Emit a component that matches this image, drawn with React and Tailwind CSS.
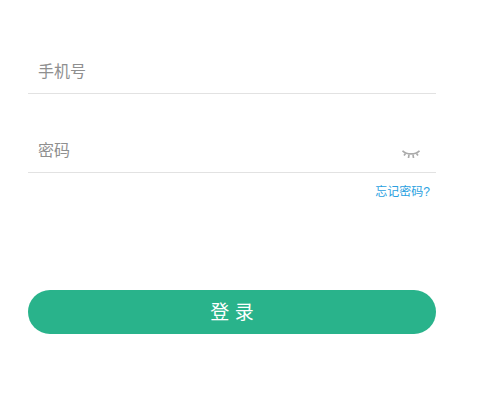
export default function App() {
  return (
    <div className="w-[483px] h-[408px] bg-white pt-[50px] pl-[28px] font-['Liberation_Sans','Noto_Sans_CJK_SC',sans-serif]">
      <div className="w-[408px]">
        <div className="h-[44px] border-b border-[#e2e2e2] pl-[10px] flex items-center text-[16px] text-[#8f8f8f]">手机号</div>
        <div className="mt-[35px] h-[44px] border-b border-[#e2e2e2] pl-[10px] pr-[16px] flex items-center justify-between text-[16px] text-[#8f8f8f]">
          <span>密码</span>
          <svg width="18" height="9" viewBox="0 0 18 9" fill="none" stroke="#ababab" strokeWidth="1.7" className="mt-[7px]">
            <path d="M0.5 0.8 C5 5 13 5 17.5 0.8" />
            <path d="M3.5 3.5 L2 5.5 M7 4.5 L6.5 8 M11 4.5 L11.5 8 M14.5 3.5 L16 5.5" />
          </svg>
        </div>
        <div className="flex justify-end pr-[6px] mt-[11px] text-[12px] leading-[16px] text-[#2a9fe0]">忘记密码?</div>
        <button className="mt-[90px] w-full h-[44px] pt-[2px] rounded-[22px] bg-[#29b38b] text-white text-[19px] flex items-center justify-center">登 录</button>
      </div>
    </div>
  );
}
